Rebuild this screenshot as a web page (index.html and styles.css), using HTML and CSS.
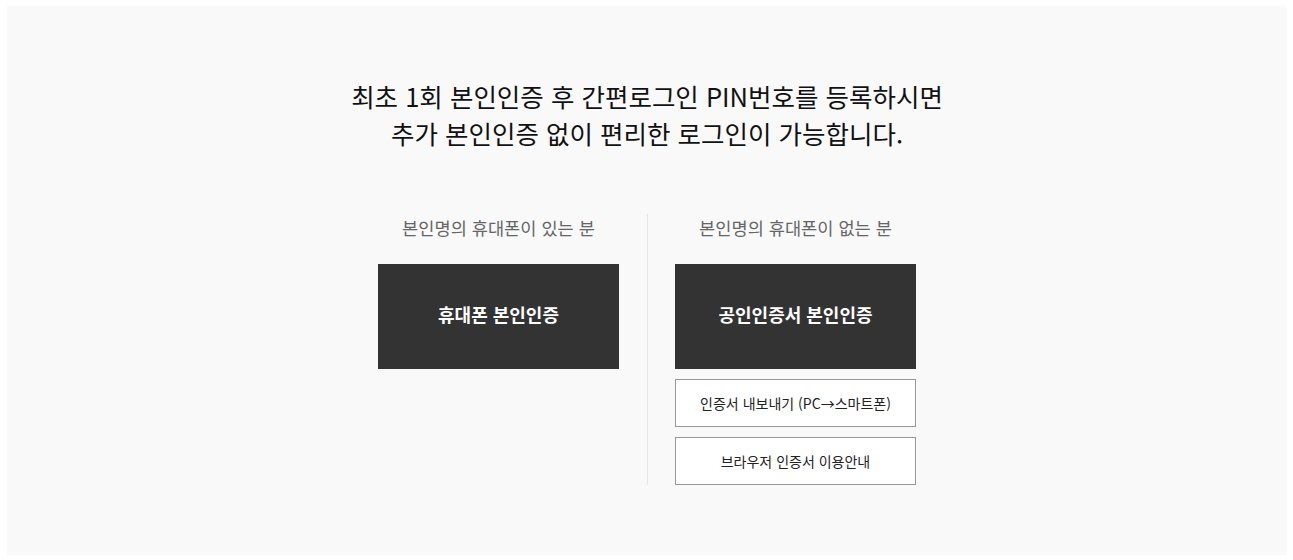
FILE: index.html
```html
<!DOCTYPE html>
<html lang="ko">
<head>
<meta charset="utf-8">
<title>본인인증</title>
<link rel="stylesheet" href="styles.css">
</head>
<body>
<div class="panel">
  <p class="intro">최초 1회 본인인증 후 간편로그인 PIN번호를 등록하시면<br>추가 본인인증 없이 편리한 로그인이 가능합니다.</p>
  <div class="cols">
    <div class="col col-left">
      <h3 class="col-title">본인명의 휴대폰이 있는 분</h3>
      <a class="btn-dark" href="#">휴대폰 본인인증</a>
    </div>
    <div class="col col-right">
      <h3 class="col-title">본인명의 휴대폰이 없는 분</h3>
      <a class="btn-dark" href="#">공인인증서 본인인증</a>
      <a class="btn-line" href="#">인증서 내보내기 (PC→스마트폰)</a>
      <a class="btn-line" href="#">브라우저 인증서 이용안내</a>
    </div>
  </div>
</div>
</body>
</html>
```

FILE: styles.css
```css
html, body {
  margin: 0;
  padding: 0;
  background: #fff;
}
body {
  padding: 6px 6px 5px 7px;
  font-family: "Noto Sans CJK KR", "Noto Sans", sans-serif;
}
.panel {
  width: 1280px;
  height: 549px;
  box-sizing: border-box;
  background: #f9f9f9;
  padding-top: 71px;
}
.intro {
  margin: 0;
  text-align: center;
  font-size: 25.5px;
  line-height: 37px;
  color: #111;
  font-weight: 400;
}
.cols {
  display: flex;
  justify-content: center;
  margin-top: 63px;
}
.col {
  display: flex;
  flex-direction: column;
  width: 241px;
}
.col-left {
  padding-right: 28px;
  border-right: 1px solid #e6e6e6;
}
.col-right {
  padding-left: 27px;
}
.col-title {
  margin: 0 0 22px;
  text-align: center;
  font-size: 17.6px;
  line-height: 28px;
  font-weight: 400;
  color: #666;
}
.btn-dark {
  display: flex;
  align-items: center;
  justify-content: center;
  height: 105px;
  box-sizing: border-box;
  padding-bottom: 6px;
  background: #333;
  color: #fff;
  font-size: 18px;
  font-weight: 700;
  text-decoration: none;
}
.btn-line {
  display: flex;
  align-items: center;
  justify-content: center;
  height: 48px;
  box-sizing: border-box;
  margin-top: 10px;
  border: 1px solid #999;
  background: #fff;
  color: #222;
  font-size: 14px;
  text-decoration: none;
}
```
